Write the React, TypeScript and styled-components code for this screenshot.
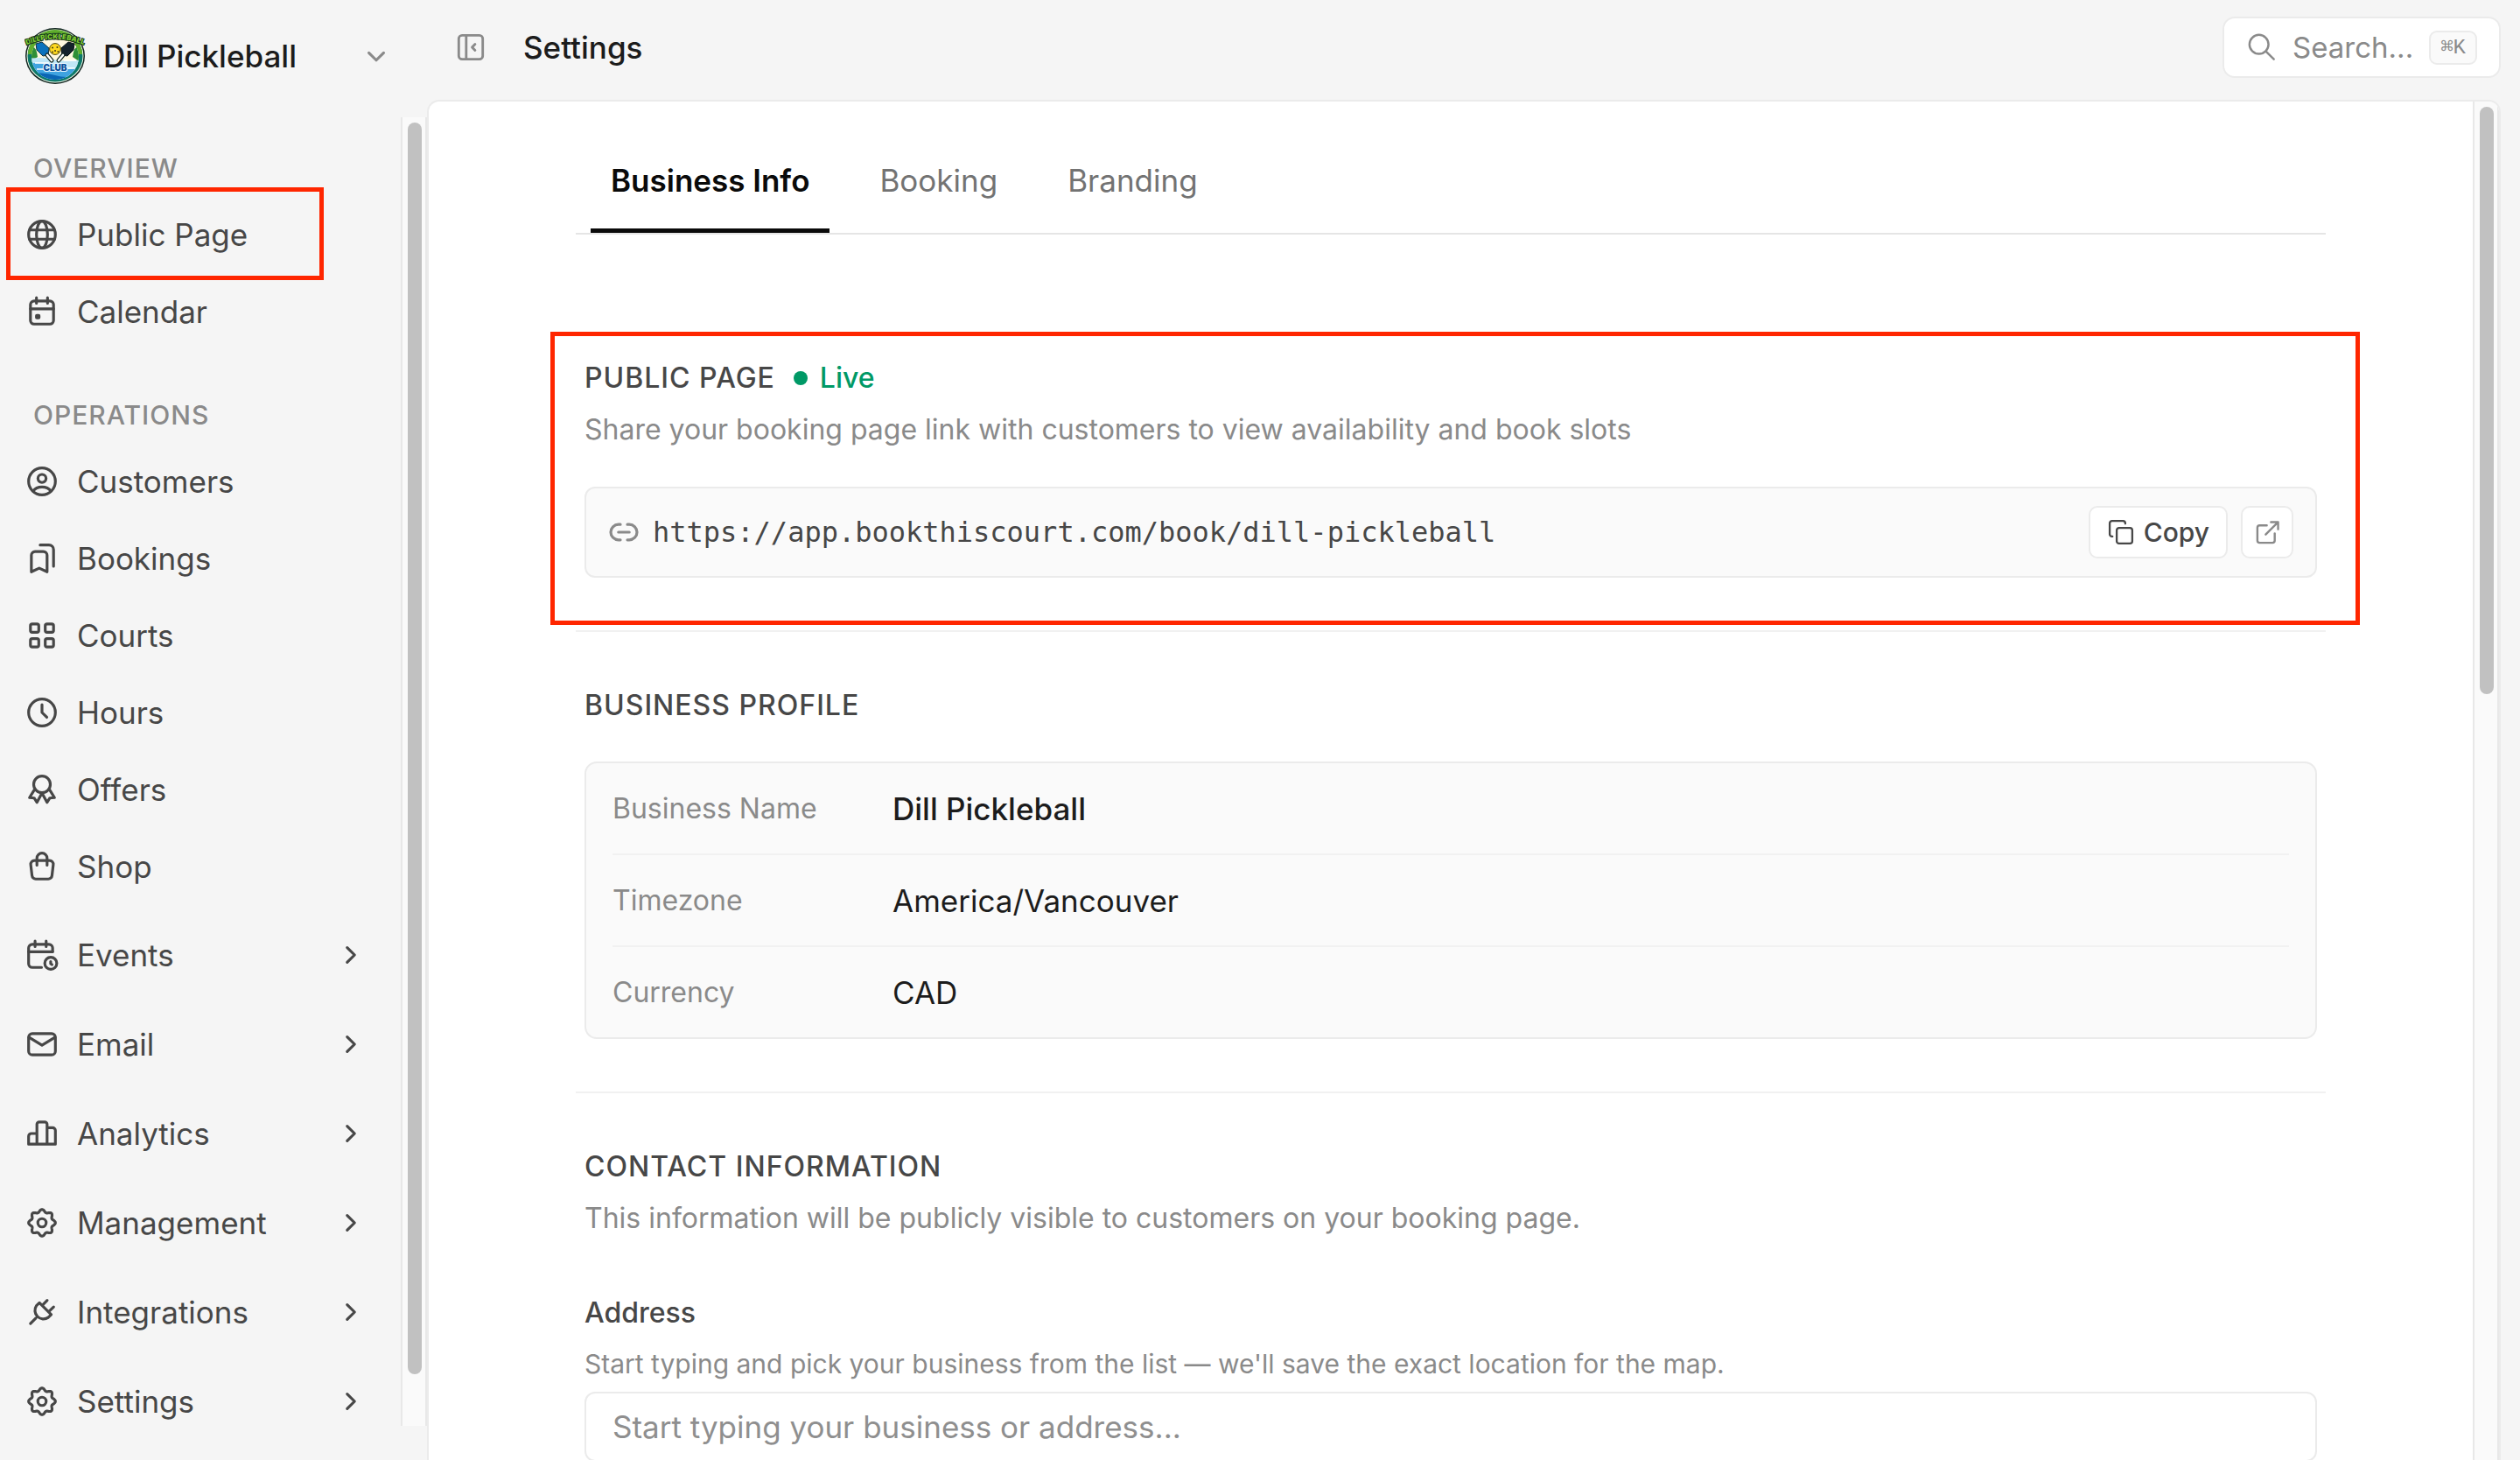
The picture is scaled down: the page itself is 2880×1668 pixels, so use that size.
import React from "react";
import styled, { createGlobalStyle } from "styled-components";

const color = {
  canvas: "#f5f5f5",
  panel: "#ffffff",
  subtle: "#fafafa",
  border: "#ebebeb",
  line: "#f1f1f1",
  ink: "#1c1c1c",
  body: "#474747",
  muted: "#8a8a8a",
  live: "#009966",
  mark: "#ff2600",
};

const GlobalStyle = createGlobalStyle`
  *, *::before, *::after { box-sizing: border-box; }
  body {
    margin: 0;
    background: ${color.canvas};
    color: ${color.ink};
    font-family: Inter, "Liberation Sans", sans-serif;
    font-size: 35px;
    line-height: 48px;
  }
  h1, h2, p, ul, dl, dd { margin: 0; padding: 0; }
  ul { list-style: none; }
  button, input { font: inherit; color: inherit; }
  button { cursor: pointer; }
  a { color: inherit; text-decoration: none; }
`;

/* ---------- Icons ---------- */

const Svg = styled.svg<{ $size: number }>`
  display: block;
  flex: none;
  width: ${(p) => p.$size}px;
  height: ${(p) => p.$size}px;
  fill: none;
  stroke: currentColor;
  stroke-linecap: round;
  stroke-linejoin: round;
`;

const gearPath = (() => {
  const points: string[] = [];
  for (let i = 0; i < 96; i++) {
    const t = (i / 96) * Math.PI * 2;
    const r = 6.5 + 0.75 * Math.cos(8 * t);
    points.push(`${(9 + r * Math.sin(t)).toFixed(2)} ${(9 - r * Math.cos(t)).toFixed(2)}`);
  }
  return `M${points.join("L")}Z`;
})();

const glyphs = {
  globe: (
    <>
      <circle cx="9" cy="9" r="7.25" />
      <ellipse cx="9" cy="9" rx="3" ry="7.25" />
      <path d="M2.2 6.5h13.6M2.2 11.5h13.6" />
    </>
  ),
  calendar: (
    <>
      <rect x="2.75" y="3.25" width="12.5" height="12.5" rx="2" />
      <path d="M2.75 7.5h12.5M6 1.5v3M12 1.5v3" />
      <rect x="6" y="11" width="1.4" height="1.4" rx=".2" />
    </>
  ),
  customer: (
    <>
      <circle cx="9" cy="9" r="7.25" />
      <circle cx="9" cy="7.4" r="2.2" />
      <path d="M4.2 14.2c1-1.4 2.8-2.2 4.8-2.2s3.8.8 4.8 2.2" />
    </>
  ),
  bookmarks: (
    <>
      <path d="M11.75 16.25 7.5 14.25l-4.25 2V7.25a2 2 0 0 1 2-2h4.5a2 2 0 0 1 2 2z" />
      <path d="M8 1.75h4.75a2.5 2.5 0 0 1 2.5 2.5v9" />
    </>
  ),
  grid: (
    <>
      <rect x="2.75" y="2.75" width="4.5" height="4.5" rx="1" />
      <rect x="10.75" y="2.75" width="4.5" height="4.5" rx="1" />
      <rect x="2.75" y="10.75" width="4.5" height="4.5" rx="1" />
      <rect x="10.75" y="10.75" width="4.5" height="4.5" rx="1" />
    </>
  ),
  clock: (
    <>
      <circle cx="9" cy="9" r="7.25" />
      <path d="M9 4.75V9l2.6 2.6" />
    </>
  ),
  award: (
    <>
      <circle cx="9" cy="6.25" r="4.5" />
      <path d="M4.7 9.4 2.25 13.4l2.5.2 1.5 2.4L8.7 11.5M13.3 9.4l2.45 4-2.5.2-1.5 2.4L9.3 11.5" />
    </>
  ),
  bag: (
    <>
      <path d="M4.9 5.75h8.2a2 2 0 0 1 2 2.2l-.7 6a2 2 0 0 1-2 1.8H5.6a2 2 0 0 1-2-1.8l-.7-6a2 2 0 0 1 2-2.2z" />
      <path d="M6.25 8.25V4.5a2.75 2.75 0 0 1 5.5 0v3.75" />
    </>
  ),
  events: (
    <>
      <path d="M14.75 7.25v-2a2 2 0 0 0-2-2h-9a2 2 0 0 0-2 2v8.5a2 2 0 0 0 2 2h5" />
      <path d="M1.75 7.25h13M5.25 1.5v3M11.25 1.5v3" />
      <circle cx="13.75" cy="13.5" r="3.25" />
      <path d="M13.7 12.6v1.1l.7.5" />
    </>
  ),
  mail: (
    <>
      <rect x="1.75" y="3.25" width="14.5" height="11.5" rx="2" />
      <path d="M2 5.25 9 9.5l7-4.25" />
    </>
  ),
  chart: (
    <>
      <path d="M6.25 9h-3a1.5 1.5 0 0 0-1.5 1.5v4.25h4.5zM6.25 14.75h5.5V4a1.25 1.25 0 0 0-1.25-1.25h-3A1.25 1.25 0 0 0 6.25 4zM11.75 5.9h3a1.5 1.5 0 0 1 1.5 1.5v7.35h-4.5z" />
    </>
  ),
  gear: (
    <>
      <path d={gearPath} />
      <circle cx="9" cy="9" r="2.25" />
    </>
  ),
  plug: (
    <>
      <path d="m7.6 4 6.4 6.4-1.6 1.5a4.6 4.6 0 0 1-6.4-6.4zM5.7 12.3 2.75 15.25M9.6 4.9l2.2-2.2M13.1 8.4l2.2-2.2" />
    </>
  ),
  chevronRight: <path d="m7 5 4 4-4 4" />,
  chevronDown: <path d="m5 7.25 4 4 4-4" />,
  sidebar: (
    <>
      <rect x="1.75" y="1.75" width="14.5" height="14.5" rx="2" />
      <path d="M6.25 1.75v14.5M11.6 7.1 9.8 9l1.8 1.9" />
    </>
  ),
  search: (
    <>
      <circle cx="7.25" cy="7.25" r="5.75" />
      <path d="m11.4 11.4 4.85 4.85" />
    </>
  ),
  link: (
    <>
      <path d="M7 4.6H5.9a4.4 4.4 0 0 0 0 8.8H7M11 4.6h1.1a4.4 4.4 0 0 1 0 8.8H11M5.9 9h6.2" />
    </>
  ),
  copy: (
    <>
      <rect x="6.25" y="6.25" width="10" height="10" rx="1.5" />
      <path d="M3.5 11.75h-.25a1.5 1.5 0 0 1-1.5-1.5v-7a1.5 1.5 0 0 1 1.5-1.5h7a1.5 1.5 0 0 1 1.5 1.5v.25" />
    </>
  ),
  external: (
    <>
      <path d="M8.5 4.25H3.75a1.5 1.5 0 0 0-1.5 1.5v8.5a1.5 1.5 0 0 0 1.5 1.5h8.5a1.5 1.5 0 0 0 1.5-1.5V9.5M7.75 10.25l8-8M11.25 2h4.75v4.75" />
    </>
  ),
};

type GlyphName = keyof typeof glyphs;

function Icon({ name, size = 38, stroke = 1.5 }: { name: GlyphName; size?: number; stroke?: number }) {
  return (
    <Svg $size={size} viewBox="0 0 18 18" strokeWidth={stroke} aria-hidden="true">
      {glyphs[name]}
    </Svg>
  );
}

const LogoSvg = styled.svg`
  display: block;
  flex: none;
  width: 70px;
  height: 66px;
`;

function ClubLogo() {
  return (
    <LogoSvg viewBox="0 0 70 66" role="img" aria-label="Dill Pickleball Club">
      <defs>
        <clipPath id="badge-disc">
          <ellipse cx="35" cy="34" rx="27" ry="26" />
        </clipPath>
        <path id="badge-arc" d="M3 20Q35 7 67 20" />
      </defs>
      <ellipse cx="35" cy="33" rx="34" ry="32" fill="#10241f" />
      <ellipse cx="35" cy="33" rx="32.5" ry="30.5" fill="#f4f8e8" />
      <ellipse cx="35" cy="33" rx="31.5" ry="29.5" fill="#0d7a6b" />
      <path d="M4 31A31 28 0 0 1 66 31L60 31A25 24 0 0 0 10 31Z" fill="#5fae2c" />
      <g clipPath="url(#badge-disc)">
        <rect width="70" height="66" fill="#fff8df" />
        <path d="M6 20q8 2 9 14l-9 6zM64 20q-8 2-9 14l9 6z" fill="#2f8f35" />
        <path d="M0 37q18-4 34 0t36-1v30H0z" fill="#bfe6f7" />
        <path d="M0 43q16-5 34 2t36-3v24H0z" fill="#3fa3e0" />
        <path d="M0 55q20-5 35 0t35-2v13H0z" fill="#0a66b4" />
        <path d="M12 41h16M45 38h14M14 48h10M48 47h10" stroke="#fff" strokeWidth="1.4" />
      </g>
      <path d="m13 19 7-2 8 7-1 8-6 1-7-7z" fill="#0b72bd" stroke="#12303a" />
      <path d="m57 19-7-2-8 7 1 8 6 1 7-7z" fill="#15222b" stroke="#0a1418" />
      <path d="m26 32 5 6M44 32l-5 6" stroke="#10241f" strokeWidth="5" strokeLinecap="round" />
      <path d="m26 32 5 6M44 32l-5 6" stroke="#fff" strokeWidth="2.6" strokeLinecap="round" />
      <circle cx="35" cy="25" r="6.4" fill="#ffd91f" stroke="#4c4310" />
      <path d="M32 23.4h.1M37.4 23h.1M35 27h.1M38.4 28h.1M32 28.4h.1" stroke="#4c4310" strokeWidth="2" strokeLinecap="round" />
      <text
        fontFamily="Inter, sans-serif"
        fontSize="8"
        fontWeight="900"
        fill="#7cc832"
        stroke="#14331a"
        strokeWidth="2"
        paintOrder="stroke"
        textAnchor="middle"
      >
        <textPath href="#badge-arc" startOffset="50%">
          DILLPICKLEBALL
        </textPath>
      </text>
      <text
        x="35"
        y="50"
        fontFamily="Inter, sans-serif"
        fontSize="10"
        fontWeight="900"
        fill="#0b4f9c"
        stroke="#e8f6ff"
        strokeWidth="2"
        paintOrder="stroke"
        textAnchor="middle"
      >
        CLUB
      </text>
    </LogoSvg>
  );
}

/* ---------- Shell ---------- */

const Shell = styled.div`
  display: grid;
  grid-template-columns: 488px minmax(0, 1fr);
  height: 100vh;
  overflow: hidden;
`;

const Sidebar = styled.aside`
  display: flex;
  flex-direction: column;
  min-height: 0;
  padding-bottom: 39px;
`;

const Workspace = styled.button`
  display: flex;
  align-items: center;
  gap: 20px;
  height: 134px;
  flex: none;
  padding: 0 39px 6px 28px;
  border: 0;
  background: none;
  text-align: left;
  color: ${color.muted};
`;

const WorkspaceName = styled.span`
  flex: 1;
  font-weight: 500;
  color: ${color.ink};
`;

const ScrollArea = styled.div`
  display: flex;
  flex: 1;
  min-height: 0;
`;

const Track = styled.div`
  flex: none;
  width: 30px;
  padding: 6px;
  border: solid #e8e8e8;
  border-width: 0 2px;
  background: ${color.subtle};
`;

const Thumb = styled.div<{ $share: number }>`
  width: 16px;
  height: ${(p) => p.$share}%;
  border-radius: 8px;
  background: #c1c1c1;
`;

const Nav = styled.nav`
  flex: 1;
  min-width: 0;
  overflow: hidden;
  padding: 34px 24px 0 10px;
`;

const NavHeading = styled.h2<{ $spaced?: boolean }>`
  margin-top: ${(p) => (p.$spaced ? 50 : 0)}px;
  padding: 0 28px;
  height: 56px;
  font-size: 30px;
  font-weight: 500;
  letter-spacing: 1px;
  color: ${color.muted};
`;

const NavItem = styled.li<{ $height: number }>`
  position: relative;
  height: ${(p) => p.$height}px;
  color: ${color.body};
`;

const navRow = `
  display: flex;
  align-items: center;
  gap: 21px;
  width: 100%;
  height: 100%;
  padding: 0 14px 0 19px;
  border: 0;
  background: none;
  text-align: left;
`;

const NavLink = styled.a`
  ${navRow}
`;

const NavToggle = styled.button`
  ${navRow}
`;

const NavLabel = styled.span`
  flex: 1;
`;

const NavMark = styled.span`
  position: absolute;
  inset: -10px 64px -8px -3px;
  border: 5px solid ${color.mark};
  pointer-events: none;
`;

const Main = styled.main`
  display: flex;
  flex-direction: column;
  min-width: 0;
  min-height: 0;
  padding-right: 22px;
`;

const TopBar = styled.header`
  display: flex;
  align-items: center;
  gap: 43px;
  flex: none;
  height: 114px;
  padding: 0 0 6px 33px;
`;

const IconButton = styled.button`
  display: flex;
  padding: 0;
  border: 0;
  background: none;
  color: ${color.muted};
`;

const PageTitle = styled.h1`
  flex: 1;
  font-size: 35px;
  font-weight: 500;
`;

const SearchButton = styled.button`
  display: flex;
  align-items: center;
  gap: 18px;
  height: 70px;
  padding: 0 25px 0 26px;
  border: 2px solid ${color.border};
  border-radius: 14px;
  background: ${color.panel};
  color: ${color.muted};
  font-size: 33px;
`;

const Kbd = styled.kbd`
  display: block;
  padding: 0 11px;
  border: 2px solid ${color.border};
  border-radius: 9px;
  background: ${color.subtle};
  font-family: "Liberation Mono", "DejaVu Sans Mono", monospace;
  font-size: 24px;
  line-height: 35px;
`;

const Panel = styled.div`
  display: flex;
  flex: 1;
  min-height: 0;
  overflow: hidden;
  border: 2px solid ${color.border};
  border-bottom: 0;
  border-radius: 14px 14px 0 0;
  background: ${color.panel};
`;

const Scroller = styled.div`
  flex: 1;
  min-width: 0;
  overflow: hidden;
`;

const Column = styled.div`
  max-width: 2000px;
  margin: 0 auto;
`;

/* ---------- Tabs ---------- */

const TabList = styled.div`
  display: flex;
  gap: 34px;
  height: 152px;
  padding: 0 17px;
  border-bottom: 2px solid #e5e5e5;
`;

const Tab = styled.button<{ $active?: boolean }>`
  display: flex;
  align-items: flex-start;
  padding: 66px 23px 0;
  border: 0;
  border-bottom: 5px solid ${(p) => (p.$active ? "#0a0a0a" : "transparent")};
  background: none;
  color: ${(p) => (p.$active ? "#0a0a0a" : "#737373")};
  font-weight: ${(p) => (p.$active ? 600 : 400)};
`;

/* ---------- Sections ---------- */

const Section = styled.section<{ $top: number }>`
  position: relative;
  padding: ${(p) => p.$top}px 10px 60px;
  border-bottom: 2px solid ${color.line};
`;

const SectionMark = styled.span`
  position: absolute;
  inset: 111px -39px 6px -29px;
  border: 5px solid ${color.mark};
  pointer-events: none;
`;

const HeadingRow = styled.div`
  display: flex;
  align-items: center;
  gap: 21px;
`;

const SectionTitle = styled.h2`
  font-size: 32px;
  font-weight: 500;
  letter-spacing: 1px;
  color: ${color.body};
`;

const LiveStatus = styled.span`
  display: flex;
  align-items: center;
  gap: 14px;
  font-size: 32px;
  font-weight: 500;
  color: ${color.live};

  &::before {
    content: "";
    width: 16px;
    height: 16px;
    border-radius: 50%;
    background: currentColor;
  }
`;

const SectionText = styled.p`
  margin-top: 11px;
  font-size: 32px;
  color: ${color.muted};
`;

const LinkBox = styled.div`
  display: flex;
  align-items: center;
  gap: 15px;
  height: 104px;
  margin-top: 41px;
  padding: 0 25px;
  border: 2px solid ${color.border};
  border-radius: 12px;
  background: ${color.subtle};
  color: ${color.muted};
`;

const LinkUrl = styled.a`
  flex: 1;
  font-family: "DejaVu Sans Mono", "Liberation Mono", monospace;
  font-size: 32px;
  color: ${color.body};
`;

const OutlineButton = styled.button`
  display: flex;
  align-items: center;
  justify-content: center;
  gap: 10px;
  height: 60px;
  min-width: 60px;
  padding: 0 19px;
  border: 2px solid ${color.border};
  border-radius: 10px;
  background: ${color.panel};
  color: ${color.body};
  font-size: 30px;
  font-weight: 500;
`;

const OpenLink = styled(OutlineButton).attrs({ as: "a" })`
  padding: 0;
  color: ${color.muted};
`;

const Details = styled.dl`
  margin-top: 40px;
  padding: 0 30px;
  border: 2px solid ${color.border};
  border-radius: 14px;
  background: ${color.subtle};
`;

const DetailRow = styled.div`
  display: grid;
  grid-template-columns: 320px 1fr;
  align-items: center;
  height: 105px;

  &:not(:last-child) {
    border-bottom: 2px solid ${color.line};
  }
  &:last-child {
    height: 103px;
  }
`;

const DetailTerm = styled.dt`
  font-size: 32px;
  color: ${color.muted};
`;

const DetailValue = styled.dd<{ $strong?: boolean }>`
  font-size: 35px;
  font-weight: ${(p) => (p.$strong ? 500 : 400)};
`;

const Field = styled.div`
  display: flex;
  flex-direction: column;
  margin-top: 60px;
`;

const FieldLabel = styled.label`
  font-size: 32px;
  font-weight: 500;
  color: ${color.body};
`;

const FieldHint = styled.p`
  margin: 10px 0 8px;
  font-size: 30px;
  color: ${color.muted};
`;

const TextInput = styled.input`
  width: 100%;
  height: 80px;
  padding: 0 30px;
  border: 2px solid ${color.border};
  border-radius: 12px;
  background: ${color.panel};
  font-size: 35px;

  &::placeholder {
    color: #8f8f8f;
    opacity: 1;
  }
`;

/* ---------- Data ---------- */

type Item = { label: string; icon: GlyphName; marked?: boolean };

const overview: Item[] = [
  { label: "Public Page", icon: "globe", marked: true },
  { label: "Calendar", icon: "calendar" },
];

const operations: Item[] = [
  { label: "Customers", icon: "customer" },
  { label: "Bookings", icon: "bookmarks" },
  { label: "Courts", icon: "grid" },
  { label: "Hours", icon: "clock" },
  { label: "Offers", icon: "award" },
  { label: "Shop", icon: "bag" },
];

const groups: Item[] = [
  { label: "Events", icon: "events" },
  { label: "Email", icon: "mail" },
  { label: "Analytics", icon: "chart" },
  { label: "Management", icon: "gear" },
  { label: "Integrations", icon: "plug" },
  { label: "Settings", icon: "gear" },
];

const profile = [
  { term: "Business Name", value: "Dill Pickleball", strong: true },
  { term: "Timezone", value: "America/Vancouver" },
  { term: "Currency", value: "CAD" },
];

const bookingUrl = "https://app.bookthiscourt.com/book/dill-pickleball";

function LinkList({ items }: { items: Item[] }) {
  return (
    <ul>
      {items.map((item) => (
        <NavItem key={item.label} $height={88}>
          <NavLink href="#">
            <Icon name={item.icon} />
            <NavLabel>{item.label}</NavLabel>
          </NavLink>
          {item.marked && <NavMark />}
        </NavItem>
      ))}
    </ul>
  );
}

const GroupList = styled.ul`
  padding-top: 6px;
`;

export default function App() {
  return (
    <>
      <GlobalStyle />
      <Shell>
        <Sidebar>
          <Workspace type="button">
            <ClubLogo />
            <WorkspaceName>Dill Pickleball</WorkspaceName>
            <Icon name="chevronDown" />
          </Workspace>
          <ScrollArea>
            <Nav aria-label="Main">
              <NavHeading>OVERVIEW</NavHeading>
              <LinkList items={overview} />
              <NavHeading $spaced>OPERATIONS</NavHeading>
              <LinkList items={operations} />
              <GroupList>
                {groups.map((item) => (
                  <NavItem key={item.label} $height={102}>
                    <NavToggle type="button" aria-expanded="false">
                      <Icon name={item.icon} />
                      <NavLabel>{item.label}</NavLabel>
                      <Icon name="chevronRight" />
                    </NavToggle>
                  </NavItem>
                ))}
              </GroupList>
            </Nav>
            <Track aria-hidden="true">
              <Thumb $share={96.4} />
            </Track>
          </ScrollArea>
        </Sidebar>

        <Main>
          <TopBar>
            <IconButton type="button" aria-label="Collapse sidebar">
              <Icon name="sidebar" size={34} />
            </IconButton>
            <PageTitle>Settings</PageTitle>
            <SearchButton type="button">
              <Icon name="search" size={34} stroke={1.3} />
              <span>Search...</span>
              <Kbd>⌘K</Kbd>
            </SearchButton>
          </TopBar>

          <Panel>
            <Scroller>
              <Column>
                <TabList role="tablist">
                  <Tab type="button" role="tab" aria-selected="true" $active>
                    Business Info
                  </Tab>
                  <Tab type="button" role="tab" aria-selected="false">
                    Booking
                  </Tab>
                  <Tab type="button" role="tab" aria-selected="false">
                    Branding
                  </Tab>
                </TabList>

                <Section $top={140}>
                  <HeadingRow>
                    <SectionTitle>PUBLIC PAGE</SectionTitle>
                    <LiveStatus>Live</LiveStatus>
                  </HeadingRow>
                  <SectionText>
                    Share your booking page link with customers to view availability and book slots
                  </SectionText>
                  <LinkBox>
                    <Icon name="link" size={36} stroke={1.6} />
                    <LinkUrl href="#">{bookingUrl}</LinkUrl>
                    <OutlineButton type="button">
                      <Icon name="copy" size={32} stroke={1.3} />
                      Copy
                    </OutlineButton>
                    <OpenLink href="#" aria-label="Open public page">
                      <Icon name="external" size={31} stroke={1.4} />
                    </OpenLink>
                  </LinkBox>
                  <SectionMark />
                </Section>

                <Section $top={60}>
                  <SectionTitle>BUSINESS PROFILE</SectionTitle>
                  <Details>
                    {profile.map((row) => (
                      <DetailRow key={row.term}>
                        <DetailTerm>{row.term}</DetailTerm>
                        <DetailValue $strong={row.strong}>{row.value}</DetailValue>
                      </DetailRow>
                    ))}
                  </Details>
                </Section>

                <Section $top={60}>
                  <SectionTitle>CONTACT INFORMATION</SectionTitle>
                  <SectionText>
                    This information will be publicly visible to customers on your booking page.
                  </SectionText>
                  <Field>
                    <FieldLabel htmlFor="address">Address</FieldLabel>
                    <FieldHint id="address-hint">
                      Start typing and pick your business from the list — we'll save the exact location for the map.
                    </FieldHint>
                    <TextInput
                      id="address"
                      aria-describedby="address-hint"
                      placeholder="Start typing your business or address..."
                    />
                  </Field>
                </Section>
              </Column>
            </Scroller>
            <Track aria-hidden="true">
              <Thumb $share={43.6} />
            </Track>
          </Panel>
        </Main>
      </Shell>
    </>
  );
}
